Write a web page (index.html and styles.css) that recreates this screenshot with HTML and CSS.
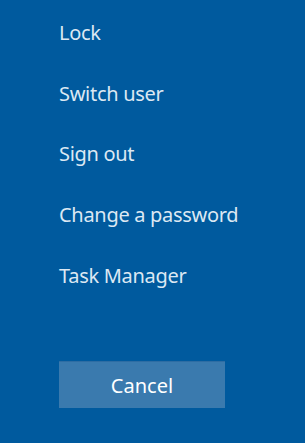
FILE: index.html
```html
<!DOCTYPE html>
<html lang="en">
<head>
  <meta charset="UTF-8" />
  <title>Security options</title>
  <link rel="stylesheet" href="styles.css">
</head>
<body>
  <div class="menu">
    <ul class="opcoes">
      <li>Lock</li>
      <li>Switch user</li>
      <li>Sign out</li>
      <li>Change a password</li>
      <li>Task Manager</li>
    </ul>
    <button class="cancelar">Cancel</button>
  </div>
</body>
</html>
```

FILE: styles.css
```css
body {
  margin: 0;
  background: #005a9e;
  font-family: 'Noto Sans', 'Open Sans', sans-serif;
  color: #dce8f3;
  height: 100vh;
  overflow: hidden;
}

.menu {
  display: flex;
  flex-direction: column;
  padding: 13px 0 0 59px;
}

.opcoes {
  list-style: none;
  margin: 0;
  padding: 0;
}

.opcoes li {
  font-size: 20px;
  letter-spacing: -0.3px;
  height: 60.7px;
  line-height: 40px;
}

.cancelar {
  margin-top: 45px;
  width: 166px;
  height: 47px;
  background: #3a7aae;
  border: none;
  border-top: 1px solid #2e6da3;
  color: #ffffff;
  font-family: 'Noto Sans', 'Open Sans', sans-serif;
  font-size: 20px;
  padding: 0;
}
```
